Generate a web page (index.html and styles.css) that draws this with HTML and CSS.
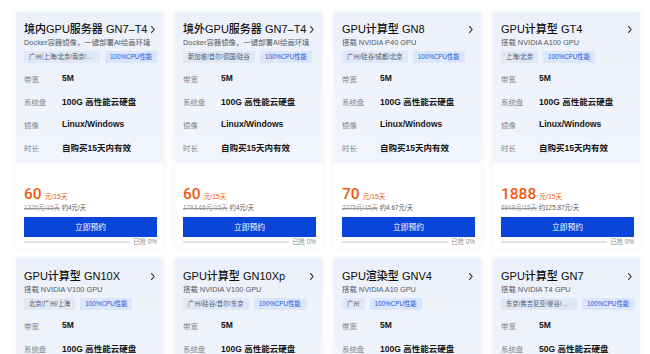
FILE: index.html
```html
<!DOCTYPE html>
<html lang="zh-CN">
<head>
<meta charset="utf-8">
<title>GPU 服务器</title>
<link rel="stylesheet" href="styles.css">
</head>
<body>
<div class="grid">

  <div class="card">
    <div class="card-top">
      <div class="title-row"><span class="title">境内GPU服务器 GN7–T4</span><svg class="chev" viewBox="0 0 4 7"><path d="M0.6 0.6 L3.2 3.5 L0.6 6.4"/></svg></div>
      <div class="sub">Docker容器镜像，一键部署AI绘画环境</div>
      <div class="tags"><span class="tag region">广州/上海/北京/南京/成都</span><span class="tag perf">100%CPU性能</span></div>
      <div class="specs">
        <div class="spec"><span class="k">带宽</span><span class="v">5M</span></div>
        <div class="spec"><span class="k">系统盘</span><span class="v">100G 高性能云硬盘</span></div>
        <div class="spec"><span class="k">镜像</span><span class="v">Linux/Windows</span></div>
        <div class="spec"><span class="k">时长</span><span class="v">自购买15天内有效</span></div>
      </div>
    </div>
    <div class="card-bottom">
      <div class="price"><span class="num">60</span><span class="unit">元/15天</span></div>
      <div class="orig"><s>1325元/15天</s> 约4元/天</div>
      <button class="buy">立即预约</button>
      <div class="progress"><div class="bar"></div><span class="sold">已抢 0%</span></div>
    </div>
  </div>

  <div class="card">
    <div class="card-top">
      <div class="title-row"><span class="title">境外GPU服务器 GN7–T4</span><svg class="chev" viewBox="0 0 4 7"><path d="M0.6 0.6 L3.2 3.5 L0.6 6.4"/></svg></div>
      <div class="sub">Docker容器镜像，一键部署AI绘画环境</div>
      <div class="tags"><span class="tag region">新加坡/首尔/德国/硅谷</span><span class="tag perf">100%CPU性能</span></div>
      <div class="specs">
        <div class="spec"><span class="k">带宽</span><span class="v">5M</span></div>
        <div class="spec"><span class="k">系统盘</span><span class="v">100G 高性能云硬盘</span></div>
        <div class="spec"><span class="k">镜像</span><span class="v">Linux/Windows</span></div>
        <div class="spec"><span class="k">时长</span><span class="v">自购买15天内有效</span></div>
      </div>
    </div>
    <div class="card-bottom">
      <div class="price"><span class="num">60</span><span class="unit">元/15天</span></div>
      <div class="orig"><s>1793.65元/15天</s> 约4元/天</div>
      <button class="buy">立即预约</button>
      <div class="progress"><div class="bar"></div><span class="sold">已抢 0%</span></div>
    </div>
  </div>

  <div class="card">
    <div class="card-top">
      <div class="title-row"><span class="title">GPU计算型 GN8</span><svg class="chev" viewBox="0 0 4 7"><path d="M0.6 0.6 L3.2 3.5 L0.6 6.4"/></svg></div>
      <div class="sub">搭载 NVIDIA P40 GPU</div>
      <div class="tags"><span class="tag region">广州/硅谷/成都/北京</span><span class="tag perf">100%CPU性能</span></div>
      <div class="specs">
        <div class="spec"><span class="k">带宽</span><span class="v">5M</span></div>
        <div class="spec"><span class="k">系统盘</span><span class="v">100G 高性能云硬盘</span></div>
        <div class="spec"><span class="k">镜像</span><span class="v">Linux/Windows</span></div>
        <div class="spec"><span class="k">时长</span><span class="v">自购买15天内有效</span></div>
      </div>
    </div>
    <div class="card-bottom">
      <div class="price"><span class="num">70</span><span class="unit">元/15天</span></div>
      <div class="orig"><s>2275元/15天</s> 约4.67元/天</div>
      <button class="buy">立即预约</button>
      <div class="progress"><div class="bar"></div><span class="sold">已抢 0%</span></div>
    </div>
  </div>

  <div class="card">
    <div class="card-top">
      <div class="title-row"><span class="title">GPU计算型 GT4</span><svg class="chev" viewBox="0 0 4 7"><path d="M0.6 0.6 L3.2 3.5 L0.6 6.4"/></svg></div>
      <div class="sub">搭载 NVIDIA A100 GPU</div>
      <div class="tags"><span class="tag region">上海/北京</span><span class="tag perf">100%CPU性能</span></div>
      <div class="specs">
        <div class="spec"><span class="k">带宽</span><span class="v">5M</span></div>
        <div class="spec"><span class="k">系统盘</span><span class="v">100G 高性能云硬盘</span></div>
        <div class="spec"><span class="k">镜像</span><span class="v">Linux/Windows</span></div>
        <div class="spec"><span class="k">时长</span><span class="v">自购买15天内有效</span></div>
      </div>
    </div>
    <div class="card-bottom">
      <div class="price"><span class="num">1888</span><span class="unit">元/15天</span></div>
      <div class="orig"><s>6949元/15天</s> 约125.87元/天</div>
      <button class="buy">立即预约</button>
      <div class="progress"><div class="bar"></div><span class="sold">已抢 0%</span></div>
    </div>
  </div>

  <div class="card">
    <div class="card-top">
      <div class="title-row"><span class="title">GPU计算型 GN10X</span><svg class="chev" viewBox="0 0 4 7"><path d="M0.6 0.6 L3.2 3.5 L0.6 6.4"/></svg></div>
      <div class="sub">搭载 NVIDIA V100 GPU</div>
      <div class="tags"><span class="tag region">北京/广州/上海</span><span class="tag perf">100%CPU性能</span></div>
      <div class="specs">
        <div class="spec"><span class="k">带宽</span><span class="v">5M</span></div>
        <div class="spec"><span class="k">系统盘</span><span class="v">100G 高性能云硬盘</span></div>
        <div class="spec"><span class="k">镜像</span><span class="v">Linux/Windows</span></div>
        <div class="spec"><span class="k">时长</span><span class="v">自购买15天内有效</span></div>
      </div>
    </div>
    <div class="card-bottom">
      <div class="price"><span class="num">60</span><span class="unit">元/15天</span></div>
      <div class="orig"><s>1325元/15天</s> 约4元/天</div>
      <button class="buy">立即预约</button>
      <div class="progress"><div class="bar"></div><span class="sold">已抢 0%</span></div>
    </div>
  </div>

  <div class="card">
    <div class="card-top">
      <div class="title-row"><span class="title">GPU计算型 GN10Xp</span><svg class="chev" viewBox="0 0 4 7"><path d="M0.6 0.6 L3.2 3.5 L0.6 6.4"/></svg></div>
      <div class="sub">搭载 NVIDIA V100 GPU</div>
      <div class="tags"><span class="tag region">广州/硅谷/首尔/东京</span><span class="tag perf">100%CPU性能</span></div>
      <div class="specs">
        <div class="spec"><span class="k">带宽</span><span class="v">5M</span></div>
        <div class="spec"><span class="k">系统盘</span><span class="v">100G 高性能云硬盘</span></div>
        <div class="spec"><span class="k">镜像</span><span class="v">Linux/Windows</span></div>
        <div class="spec"><span class="k">时长</span><span class="v">自购买15天内有效</span></div>
      </div>
    </div>
    <div class="card-bottom">
      <div class="price"><span class="num">60</span><span class="unit">元/15天</span></div>
      <div class="orig"><s>1325元/15天</s> 约4元/天</div>
      <button class="buy">立即预约</button>
      <div class="progress"><div class="bar"></div><span class="sold">已抢 0%</span></div>
    </div>
  </div>

  <div class="card">
    <div class="card-top">
      <div class="title-row"><span class="title">GPU渲染型 GNV4</span><svg class="chev" viewBox="0 0 4 7"><path d="M0.6 0.6 L3.2 3.5 L0.6 6.4"/></svg></div>
      <div class="sub">搭载 NVIDIA A10 GPU</div>
      <div class="tags"><span class="tag region">广州</span><span class="tag perf">100%CPU性能</span></div>
      <div class="specs">
        <div class="spec"><span class="k">带宽</span><span class="v">5M</span></div>
        <div class="spec"><span class="k">系统盘</span><span class="v">100G 高性能云硬盘</span></div>
        <div class="spec"><span class="k">镜像</span><span class="v">Linux/Windows</span></div>
        <div class="spec"><span class="k">时长</span><span class="v">自购买15天内有效</span></div>
      </div>
    </div>
    <div class="card-bottom">
      <div class="price"><span class="num">60</span><span class="unit">元/15天</span></div>
      <div class="orig"><s>1325元/15天</s> 约4元/天</div>
      <button class="buy">立即预约</button>
      <div class="progress"><div class="bar"></div><span class="sold">已抢 0%</span></div>
    </div>
  </div>

  <div class="card">
    <div class="card-top">
      <div class="title-row"><span class="title">GPU计算型 GN7</span><svg class="chev" viewBox="0 0 4 7"><path d="M0.6 0.6 L3.2 3.5 L0.6 6.4"/></svg></div>
      <div class="sub">搭载 NVIDIA T4 GPU</div>
      <div class="tags"><span class="tag region">东京/弗吉尼亚/曼谷/硅谷</span><span class="tag perf">100%CPU性能</span></div>
      <div class="specs">
        <div class="spec"><span class="k">带宽</span><span class="v">5M</span></div>
        <div class="spec"><span class="k">系统盘</span><span class="v">50G 高性能云硬盘</span></div>
        <div class="spec"><span class="k">镜像</span><span class="v">Linux/Windows</span></div>
        <div class="spec"><span class="k">时长</span><span class="v">自购买15天内有效</span></div>
      </div>
    </div>
    <div class="card-bottom">
      <div class="price"><span class="num">60</span><span class="unit">元/15天</span></div>
      <div class="orig"><s>1325元/15天</s> 约4元/天</div>
      <button class="buy">立即预约</button>
      <div class="progress"><div class="bar"></div><span class="sold">已抢 0%</span></div>
    </div>
  </div>

</div>
</body>
</html>
```

FILE: styles.css
```css
html, body {
  margin: 0;
  padding: 0;
  background: #ffffff;
  overflow: hidden;
}

body {
  font-family: "Liberation Sans", "Noto Sans CJK SC", sans-serif;
  color: #111;
}

.grid {
  display: grid;
  grid-template-columns: repeat(4, 147px);
  column-gap: 12px;
  row-gap: 11px;
  padding: 12px 0 0 16px;
}

.card {
  height: 236px;
  background: #fff;
  box-shadow: 0 0 6px rgba(30, 50, 90, 0.08);
  display: flex;
  flex-direction: column;
}

.card-top {
  box-sizing: border-box;
  height: 151px;
  padding: 10px 6px 0 8px;
  background: linear-gradient(180deg, #ebf0fa 0%, #f2f5fc 100%);
}

.title-row {
  display: flex;
  justify-content: space-between;
  align-items: center;
  height: 14px;
  line-height: 14px;
}

.title {
  font-size: 11px;
  font-weight: 500;
  color: #0c0c0c;
  white-space: nowrap;
}

.chev {
  width: 4px;
  height: 7px;
  margin-right: 2px;
  flex: none;
}

.chev path {
  fill: none;
  stroke: #222;
  stroke-width: 1.1;
  stroke-linecap: round;
  stroke-linejoin: round;
}

.sub {
  margin-top: 2px;
  height: 10px;
  line-height: 10px;
  font-size: 7.4px;
  color: #555b66;
  white-space: nowrap;
}

.tags {
  margin-top: 3px;
  display: flex;
  gap: 5px;
  height: 12px;
}

.tag {
  font-size: 6.3px;
  line-height: 12px;
  padding: 0 5px;
  white-space: nowrap;
}

.tag.region {
  flex: 0 1 auto;
  min-width: 0;
  overflow: hidden;
  text-overflow: ellipsis;
  background: #e0e8f6;
  color: #4c5870;
}

.tag.perf {
  flex: none;
  background: #dbe6fb;
  color: #1c55dc;
}

.specs {
  margin-top: 3.5px;
}

.spec {
  display: flex;
  align-items: center;
  height: 23px;
}

.spec .k {
  width: 38px;
  flex: none;
  font-size: 7.4px;
  color: #7d838e;
}

.spec .v {
  font-size: 8.5px;
  font-weight: 600;
  color: #141414;
  white-space: nowrap;
}

.card-bottom {
  padding: 0 6px 0 8px;
}

.price {
  margin-top: 22px;
  height: 18px;
  line-height: 18px;
  color: #f05a0e;
  white-space: nowrap;
}

.price .num {
  font-family: Roboto, "Liberation Sans", sans-serif;
  font-size: 15.5px;
  font-weight: 500;
}

.price .unit {
  font-size: 6.8px;
  margin-left: 3px;
}

.orig {
  height: 10px;
  line-height: 10px;
  font-size: 6.4px;
  color: #555;
  white-space: nowrap;
}

.orig s {
  color: #9a9a9a;
}

.buy {
  display: block;
  width: 100%;
  margin-top: 4px;
  height: 19.5px;
  border: none;
  border-radius: 0;
  padding: 0;
  background: #0a45da;
  color: #fff;
  font-family: "Liberation Sans", "Noto Sans CJK SC", sans-serif;
  font-size: 7.8px;
}

.progress {
  margin-top: 2.5px;
  height: 5px;
  display: flex;
  align-items: center;
}

.progress .bar {
  flex: 1;
  height: 2px;
  background: #dfe4ec;
}

.progress .sold {
  margin-left: 3px;
  font-size: 6.4px;
  line-height: 5px;
  color: #888;
  white-space: nowrap;
}
```
